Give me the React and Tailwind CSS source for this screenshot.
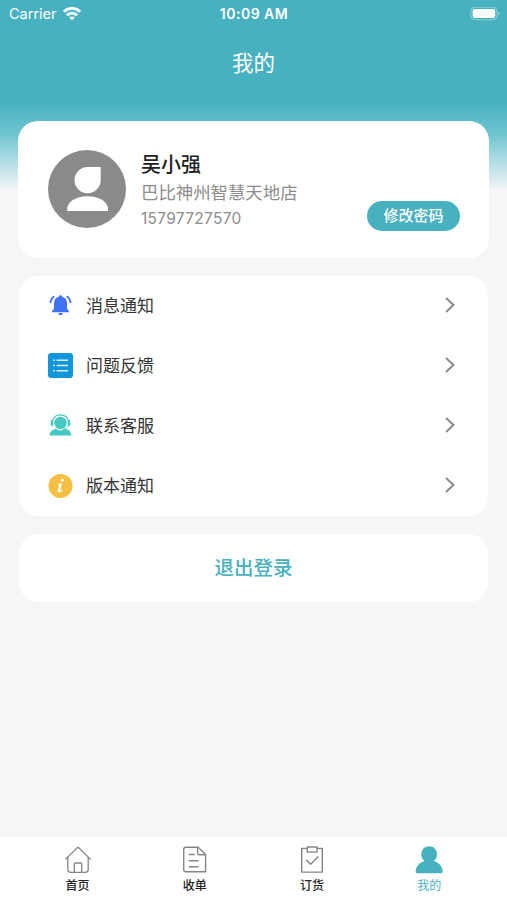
const cnFont = "font-['Inter','Noto_Sans_CJK_SC',sans-serif]";

function WifiIcon() {
  return (
    <svg width="18" height="14" viewBox="0 0 18 14" fill="none" stroke="#fff" strokeWidth="2.8">
      <path d="M.8 4.7C5.4 .2 12.6 .2 17.2 4.7" />
      <path d="M3.8 8.3C6.8 5.4 11.2 5.4 14.2 8.3" />
      <path d="M9 13.6L6.2 10.8Q9 8.4 11.8 10.8Z" fill="#fff" stroke="none" />
    </svg>
  );
}

function BatteryIcon() {
  return (
    <svg width="31" height="14" viewBox="0 0 31 14">
      <rect x=".9" y=".2" width="26" height="12.6" rx="4" fill="none" stroke="#fff" strokeOpacity=".4" />
      <rect x="2.6" y="2.1" width="22.6" height="8.8" rx="2.2" fill="#fff" />
      <path d="M28.4 4.4Q30.4 6.5 28.4 8.6Z" fill="#fff" fillOpacity=".5" />
    </svg>
  );
}

function Avatar() {
  return (
    <svg width="78" height="78" viewBox="0 0 78 78" className="shrink-0">
      <circle cx="39" cy="39" r="39" fill="#8a8a8a" />
      <path d="M39.5 17H52.7V30A13.1 13.1 0 1 1 39.5 17Z" fill="#fff" />
      <path d="M19.2 61V57.5C21 50.5 29.5 46.3 39.6 46.3S58.2 50.5 60 57.5V61Z" fill="#fff" />
    </svg>
  );
}

function BellIcon() {
  return (
    <svg width="25" height="25" viewBox="0 0 25 25">
      <path
        d="M12.5 2.2C13.5 2.2 14.1 2.8 14.2 3.7C17.4 4.5 19 7 19 10.2V15.3L21 18.4V19.3H4V18.4L6 15.3V10.2C6 7 7.6 4.5 10.8 3.7C10.9 2.8 11.5 2.2 12.5 2.2Z"
        fill="#3f72f3"
      />
      <path d="M10.3 20H14.7Q14.5 22.3 12.5 22.3T10.3 20Z" fill="#3f72f3" />
      <path
        d="M6.4 3.3C4.2 4.6 2.7 6.8 2.5 10.1M18.6 3.3C20.8 4.6 22.3 6.8 22.5 10.1"
        fill="none"
        stroke="#3f72f3"
        strokeWidth="1.7"
      />
    </svg>
  );
}

function FeedbackIcon() {
  return (
    <svg width="25" height="25" viewBox="0 0 25 25">
      <rect width="25" height="25" rx="3.2" fill="#1296db" />
      <path
        d="M5.2 7.3H7M5.2 12.5H7M5.2 17.7H7M8.6 7.3H20M8.6 12.5H20M8.6 17.7H20"
        stroke="#d9f1fb"
        strokeWidth="1.6"
      />
    </svg>
  );
}

function ServiceIcon() {
  return (
    <svg width="25" height="25" viewBox="0 0 25 25">
      <circle cx="12.5" cy="10" r="6.2" fill="#45c8c1" />
      <path d="M4.4 8.5C5.3 4.2 8.4 1.8 12.5 1.8S19.7 4.2 20.6 8.5" fill="none" stroke="#45c8c1" strokeWidth="1.2" />
      <path d="M4.1 8V12M20.9 8V12" stroke="#45c8c1" strokeWidth="2.4" strokeLinecap="round" />
      <path d="M20.6 12C19.7 14.6 17.6 16 15 16.6" fill="none" stroke="#45c8c1" strokeWidth=".9" />
      <path d="M1.6 22.6C1.8 18.8 4 16.8 7.8 15.8Q12.5 19.2 17.2 15.8C21 16.8 23.2 18.8 23.4 22.6Z" fill="#45c8c1" />
    </svg>
  );
}

function VersionIcon() {
  return (
    <svg width="25" height="25" viewBox="0 0 25 25">
      <circle cx="12.5" cy="12" r="12" fill="#f5c042" />
      <circle cx="14.3" cy="6.2" r="1.45" fill="#fff" />
      <path
        d="M10 10.1Q12 9.7 14 9.1L12.2 16.1Q12 17.3 14.6 15.4L15 15.9Q12.8 18.5 10.8 18.5Q9.2 18.3 9.8 16.1L11 11.5Q11.3 10.5 9.9 10.7Z"
        fill="#fff"
      />
    </svg>
  );
}

function HomeIcon() {
  return (
    <svg width="28" height="28" viewBox="0 0 28 28" fill="none" stroke="#858585" strokeWidth="1.3" strokeLinejoin="round" strokeLinecap="round">
      <path d="M1.7 13.1L13 2Q14 1.1 15 2L26.3 13.1" />
      <path d="M3.8 11.3V23.2Q3.8 26.3 7 26.3H21Q24.2 26.3 24.2 23.2V11.3" />
      <path d="M10.3 26.2V18Q10.3 17 11.3 17H16.7Q17.7 17 17.7 18V26.2" />
    </svg>
  );
}

function ReceiptIcon() {
  return (
    <svg width="28" height="28" viewBox="0 0 28 28" fill="none" stroke="#858585" strokeWidth="1.4" strokeLinejoin="round">
      <path d="M17.2 1.2H4.9Q2.7 1.2 2.7 3.4V23.6Q2.7 25.8 4.9 25.8H24.6V8.5Z" />
      <path d="M16.6 1.2V7.2Q16.6 8.8 18.2 8.8H24.6" />
      <path d="M7.8 8.6H13.8M7.8 14.8H17.6M7.8 20.8H17.6" strokeWidth="1.5" />
    </svg>
  );
}

function OrderIcon() {
  return (
    <svg width="28" height="28" viewBox="0 0 28 28" fill="none" stroke="#858585" strokeWidth="1.4" strokeLinejoin="round">
      <path d="M9.2 2.4H3.7V26.1H24.3V2.4H19" />
      <path d="M9.2 1H19V6.1H9.2Z" />
      <path d="M8.3 14L12.6 18.3L20.3 10.6" />
    </svg>
  );
}

function MineIcon() {
  return (
    <svg width="28" height="28" viewBox="0 0 28 28" fill="#47b1c0">
      <path d="M14.2 .3C18.8 .3 22 3.8 22 8.2C22 11.2 20.8 13.5 18.8 14.9C23.8 16.3 27.3 20 27.7 25.3Q27.8 27.2 26.2 27.2H2.2Q.5 27.2 .6 25.3C1 20 4.6 16.3 9.6 14.9C7.6 13.5 6.4 11.2 6.4 8.2C6.4 3.8 9.6 .3 14.2 .3Z" />
    </svg>
  );
}

const menu = [
  { label: "消息通知", Icon: BellIcon },
  { label: "问题反馈", Icon: FeedbackIcon },
  { label: "联系客服", Icon: ServiceIcon },
  { label: "版本通知", Icon: VersionIcon },
];

const tabs = [
  { label: "首页", Icon: HomeIcon },
  { label: "收单", Icon: ReceiptIcon },
  { label: "订货", Icon: OrderIcon },
  { label: "我的", Icon: MineIcon, active: true },
];

export default function App() {
  return (
    <div
      lang="zh-CN"
      className={`${cnFont} flex h-[900px] w-[507px] flex-col bg-[#f6f6f8] bg-[linear-gradient(180deg,#47b1c0_0px,#47b1c0_104px,#5bbbc8_118px,#6fc5cf_134px,#a9dae2_158px,#f6f6f8_191px)]`}
    >
      <div className="grid h-7 grid-cols-3 items-center pl-[9px] pr-[6px] text-white">
        <div className="flex items-center gap-[6px] text-[14.5px] leading-none">
          <span>Carrier</span>
          <WifiIcon />
        </div>
        <span className="-ml-[2px] text-center text-[14px] font-semibold leading-none tracking-[0.5px]">10:09 AM</span>
        <div className="flex justify-end">
          <BatteryIcon />
        </div>
      </div>

      <h1 className="flex h-[93px] items-start justify-center pt-[19px] text-[21.5px] leading-[32px] text-white">
        我的
      </h1>

      <main className="flex flex-1 flex-col gap-[18px] pl-[18px] pr-[18px]">
        <section className="flex h-[137px] rounded-[20px] bg-white pl-[30px] pr-[29px]">
          <div className="pt-[29px]">
            <Avatar />
          </div>
          <div className="flex flex-1 flex-col pl-[15px] pt-[30px]">
            <h2 className="text-[20px] font-medium leading-[28px] text-[#222]">吴小强</h2>
            <p className="text-[17.4px] leading-[27px] text-[#8c8c8c]">巴比神州智慧天地店</p>
            <p className="text-[15.5px] leading-[26px] tracking-[0.3px] text-[#8c8c8c]">15797727570</p>
          </div>
          <button className="mb-[27px] h-[30px] w-[93px] self-end rounded-full bg-[#47b1c0] text-[15px] font-medium leading-[30px] text-white">
            修改密码
          </button>
        </section>

        <section className="mx-[1px] h-[240px] divide-y divide-[#fbfbfb] rounded-[20px] bg-white">
          {menu.map(({ label, Icon }) => (
            <div key={label} className="flex h-[60px] items-center pl-[29px] pr-[33px]">
              <Icon />
              <span className="flex-1 pl-[13px] pt-[2px] text-[17px] text-[#333]">{label}</span>
              <svg width="10" height="16" viewBox="0 0 10 16" fill="none" stroke="#888" strokeWidth="1.9" className="mb-[2px]">
                <path d="M1 1L8.5 8L1 15" />
              </svg>
            </div>
          ))}
        </section>

        <button className="mx-[1px] h-[68px] rounded-[20px] bg-white pt-[2px] text-[19.5px] font-medium text-[#47b1c0]">
          退出登录
        </button>
      </main>

      <nav className="grid h-[63px] grid-cols-4 bg-white px-[19px]">
        {tabs.map(({ label, Icon, active }) => (
          <div key={label} className="flex flex-col items-center pt-[9px]">
            <Icon />
            <span
              className={`mt-[3px] text-[12px] leading-[18px] ${active ? "text-[#47b1c0]" : "font-medium text-[#222]"}`}
            >
              {label}
            </span>
          </div>
        ))}
      </nav>
    </div>
  );
}
